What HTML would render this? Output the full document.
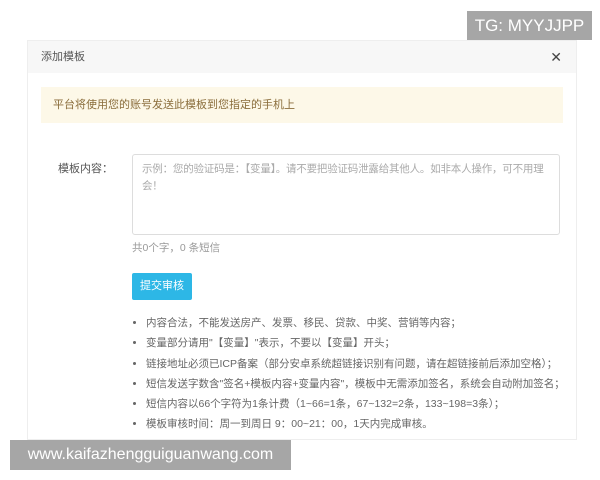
<!DOCTYPE html>
<html><head><meta charset="utf-8"><style>
body{margin:0;width:600px;height:480px;background:#fff;position:relative;overflow:hidden;font-family:"Liberation Sans","Noto Sans CJK SC",sans-serif;color:#555}
.abs{position:absolute}
.tg{left:467px;top:11px;width:125px;height:29px;background:#a6a6a6;color:#fff;font-size:17px;line-height:29px;text-align:center}
.modal{left:27px;top:40px;width:548px;height:398px;border:1px solid #eee;background:#fff}
.hd{left:0;top:0;width:548px;height:32px;background:#f7f7f7;font-size:11px;line-height:32px}
.alert{left:13px;top:46px;width:522px;height:36px;background:#fdf8e8;color:#8a6d3b;font-size:11px;line-height:36px}
.ta{left:104px;top:113px;width:428px;height:81px;border:1px solid #ddd;border-radius:3px;font-size:10.5px;color:#aaa;padding:6px 9px;box-sizing:border-box;line-height:17px;letter-spacing:-0.2px}
.btn{left:104px;top:232px;width:60px;height:27px;background:#2db7e6;border-radius:2px;color:#fff;font-size:11px;line-height:27px;text-align:center}
ul{position:absolute;left:104px;top:272px;margin:0;padding:0 0 0 14px;font-size:10.5px;color:#666;width:440px}
li{height:20.3px;line-height:20px;white-space:nowrap}
.wm{left:10px;top:440px;width:281px;height:30px;background:#a6a6a6;color:#fff;font-size:16px;line-height:30px;text-align:center}
</style></head><body>
<div class="abs tg">TG: MYYJJPP</div>
<div class="abs modal">
<div class="abs hd"><span style="margin-left:13px">添加模板</span><span style="position:absolute;right:14px;font-size:14px;color:#444;font-weight:300">✕</span></div>
<div class="abs alert"><span style="margin-left:12px">平台将使用您的账号发送此模板到您指定的手机上</span></div>
<div class="abs" style="left:30px;top:119px;font-size:11px">模板内容：</div>
<div class="abs ta">示例：您的验证码是：【变量】。请不要把验证码泄露给其他人。如非本人操作，可不用理会！</div>
<div class="abs" style="left:104px;top:199px;font-size:10.5px;color:#999">共0个字，0 条短信</div>
<div class="abs btn">提交审核</div>
<ul>
<li>内容合法，不能发送房产、发票、移民、贷款、中奖、营销等内容；</li>
<li>变量部分请用"【变量】"表示，不要以【变量】开头；</li>
<li>链接地址必须已ICP备案（部分安卓系统超链接识别有问题，请在超链接前后添加空格）；</li>
<li>短信发送字数含"签名+模板内容+变量内容"，模板中无需添加签名，系统会自动附加签名；</li>
<li>短信内容以66个字符为1条计费（1~66=1条，67~132=2条，133~198=3条）；</li>
<li>模板审核时间：周一到周日 9：00~21：00，1天内完成审核。</li>
</ul>
</div>
<div class="abs wm">www.kaifazhengguiguanwang.com</div>
</body></html>
